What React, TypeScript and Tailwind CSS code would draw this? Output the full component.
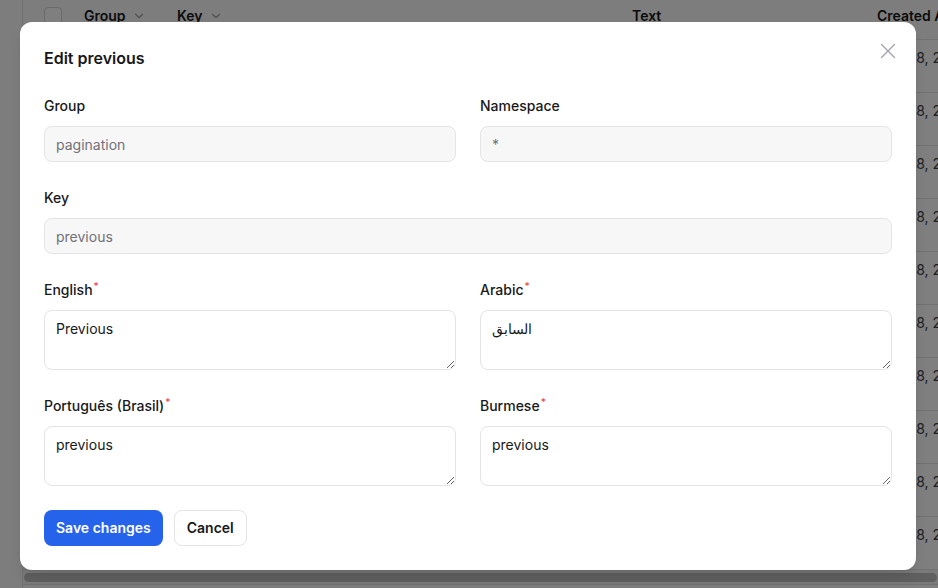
import { ChevronDown } from "lucide-react";

const rows = Array.from({ length: 10 }, (_, i) => i);

function Label({ text, required }: { text: string; required?: boolean }) {
  return (
    <label className="block text-sm leading-6 font-medium text-[#18181b]">
      {text}
      {required && (
        <sup className="ml-px text-[10px] font-medium text-[#ef4444]">*</sup>
      )}
    </label>
  );
}

function ReadField({ label, value }: { label: string; value: string }) {
  return (
    <div className="flex flex-col gap-2">
      <Label text={label} />
      <input
        readOnly
        value={value}
        className="h-9 w-full rounded-lg border border-[#e4e4e7] bg-[#f7f7f7] px-[11px] text-sm text-[#71717a] outline-none"
      />
    </div>
  );
}

function TextField({ label, value }: { label: string; value: string }) {
  return (
    <div className="flex flex-col gap-2">
      <Label text={label} required />
      <textarea
        defaultValue={value}
        className="h-[60px] w-full rounded-lg border border-[#e4e4e7] bg-white px-[11px] py-2 text-sm leading-5 text-[#18181b] outline-none"
      />
    </div>
  );
}

export default function App() {
  return (
    <div className="relative h-[588px] w-[938px] overflow-hidden bg-[#fafafa] font-['Inter',sans-serif]">
      {/* table behind the dialog */}
      <div className="ml-[22px] flex h-full flex-col border-l border-[#e4e4e7] bg-white">
        <div className="flex h-10 shrink-0 items-start border-b border-[#e4e4e7] bg-[#fafafa] pt-[6px] text-sm font-semibold text-[#18181b]">
          <div className="ml-[21px] mt-[1px] h-[18px] w-[18px] shrink-0 rounded border border-[#d4d4d8] bg-white" />
          <div className="ml-[22px] flex w-[93px] shrink-0 items-center gap-1.5">
            Group
            <ChevronDown className="h-3.5 w-3.5 text-[#a1a1aa]" />
          </div>
          <div className="flex w-[455px] shrink-0 items-center gap-1.5">
            Key
            <ChevronDown className="h-3.5 w-3.5 text-[#a1a1aa]" />
          </div>
          <div className="w-[245px] shrink-0">Text</div>
          <div className="shrink-0 whitespace-nowrap">Created At</div>
        </div>
        {rows.map((r) => (
          <div
            key={r}
            className="flex h-[53px] shrink-0 items-start border-b border-[#e4e4e7] pt-[8px] text-sm text-[#3f3f46]"
          >
            <div className="ml-[855px] shrink-0 whitespace-nowrap">Mar 28, 2025</div>
          </div>
        ))}
        <div className="flex h-[15px] shrink-0 items-center border-b border-[#e4e4e7] bg-[#f4f4f5] px-px">
          <div className="h-[9px] w-full rounded-full bg-[#c1c1c1]" />
        </div>
      </div>

      {/* overlay */}
      <div className="absolute inset-0 bg-black/50" />

      {/* dialog */}
      <div className="absolute left-[20px] top-[22px] w-[896px] rounded-xl bg-white p-6 shadow-lg">
        <button className="absolute right-[18px] top-[19px] p-0.5 text-[#a1a1aa]">
          <svg viewBox="0 0 16 16" className="h-[16px] w-[16px]" fill="none">
            <path
              d="M1.5 1.5l13 13M14.5 1.5l-13 13"
              stroke="currentColor"
              strokeWidth="1.3"
              strokeLinecap="round"
            />
          </svg>
        </button>
        <h2 className="text-base leading-6 font-semibold text-[#18181b]">
          Edit previous
        </h2>
        <div className="mt-6 grid grid-cols-2 gap-x-6 gap-y-6">
          <ReadField label="Group" value="pagination" />
          <ReadField label="Namespace" value="*" />
          <div className="col-span-2">
            <ReadField label="Key" value="previous" />
          </div>
          <TextField label="English" value="Previous" />
          <TextField label="Arabic" value="السابق" />
          <TextField label="Português (Brasil)" value="previous" />
          <TextField label="Burmese" value="previous" />
        </div>
        <div className="mt-6 flex gap-[11px]">
          <button className="h-9 rounded-lg bg-[#2563eb] px-3 text-sm font-semibold text-white">
            Save changes
          </button>
          <button className="h-9 rounded-lg border border-[#e4e4e7] bg-white px-3 text-sm font-semibold text-[#18181b]">
            Cancel
          </button>
        </div>
      </div>
    </div>
  );
}
